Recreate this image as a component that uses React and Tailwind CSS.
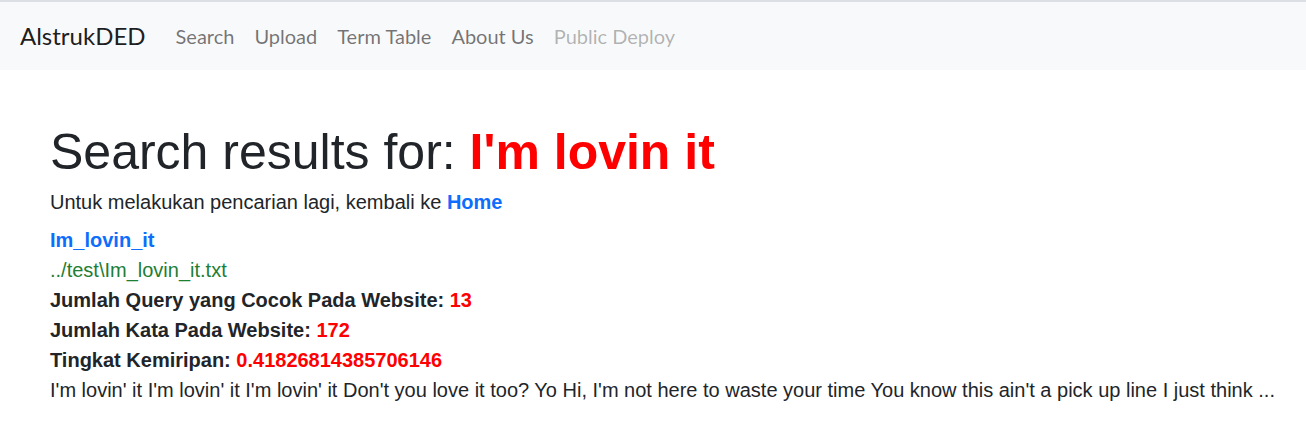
export default function App() {
  return (
    <div className="min-h-[436px] bg-white">
      <nav className="h-[70px] border-t-2 border-[#dcdfe3] bg-[#f8f9fa] flex items-center pl-[20px] font-['Lato','Open_Sans',sans-serif]">
        <span className="text-[24px] text-[rgba(0,0,0,0.9)] mr-[20px] leading-[30px]">AlstrukDED</span>
        <div className="flex items-center text-[20px] leading-[30px]">
          <span className="px-[10px] text-[rgba(0,0,0,0.55)]">Search</span>
          <span className="px-[10px] text-[rgba(0,0,0,0.55)]">Upload</span>
          <span className="px-[10px] text-[rgba(0,0,0,0.55)]">Term Table</span>
          <span className="px-[10px] text-[rgba(0,0,0,0.55)]">About Us</span>
          <span className="px-[10px] text-[rgba(0,0,0,0.3)]">Public Deploy</span>
        </div>
      </nav>
      <main className="pl-[50px] pr-[20px] pt-[52px] font-['Liberation_Sans',Arial,sans-serif] text-[#212529] text-[20px] leading-[30px]">
        <h1 className="text-[50px] leading-[60px] mb-[5px]">
          Search results for: <span className="font-bold text-[#ff0000]">I'm lovin it</span>
        </h1>
        <p className="mb-[8px]">
          Untuk melakukan pencarian lagi, kembali ke <span className="font-bold text-[#0d6efd]">Home</span>
        </p>
        <div className="font-bold text-[#0d6efd]">Im_lovin_it</div>
        <div className="text-[#1e7e34]">../test\Im_lovin_it.txt</div>
        <div className="font-bold">
          Jumlah Query yang Cocok Pada Website: <span className="text-[#ff0000]">13</span>
        </div>
        <div className="font-bold">
          Jumlah Kata Pada Website: <span className="text-[#ff0000]">172</span>
        </div>
        <div className="font-bold">
          Tingkat Kemiripan: <span className="text-[#ff0000]">0.41826814385706146</span>
        </div>
        <div>
          I'm lovin' it I'm lovin' it I'm lovin' it Don't you love it too? Yo Hi, I'm not here to waste your time You know this ain't a pick up line I just think ...
        </div>
      </main>
    </div>
  );
}
